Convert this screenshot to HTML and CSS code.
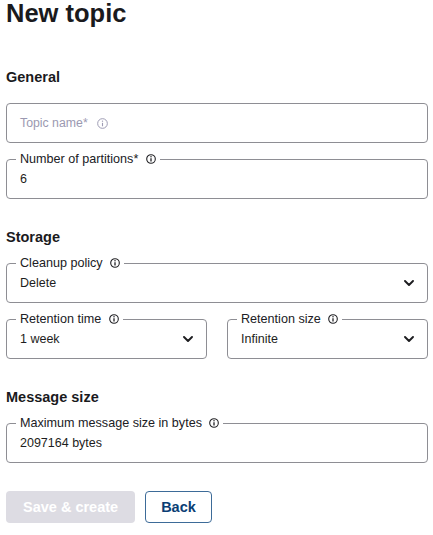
FILE: index.html
```html
<!DOCTYPE html>
<html lang="en">
<head>
<meta charset="utf-8">
<title>New topic</title>
<link rel="stylesheet" href="styles.css">
</head>
<body>
<main class="page">
  <h1 class="title">New topic</h1>

  <section class="section">
    <h2 class="section-title">General</h2>
    <div class="fields">
      <div class="input input--empty">
        <span class="placeholder">Topic name*</span>
        <svg class="info info--lg" viewBox="0 0 10 10" aria-hidden="true"><circle cx="5" cy="5" r="4.4" fill="none" stroke="currentColor" stroke-width="0.9"/><path d="M5 4.4v3.1" stroke="currentColor" stroke-width="1"/><circle cx="5" cy="2.9" r="0.6" fill="currentColor"/></svg>
      </div>
      <fieldset class="field">
        <legend class="field-label">Number of partitions* <svg class="info" viewBox="0 0 10 10" aria-hidden="true"><circle cx="5" cy="5" r="4.3" fill="none" stroke="currentColor" stroke-width="1.1"/><path d="M5 4.3v3.2" stroke="currentColor" stroke-width="1.3"/><circle cx="5" cy="2.7" r="0.75" fill="currentColor"/></svg></legend>
        <div class="field-value">6</div>
      </fieldset>
    </div>
  </section>

  <section class="section">
    <h2 class="section-title">Storage</h2>
    <div class="fields">
      <fieldset class="field">
        <legend class="field-label">Cleanup policy <svg class="info" viewBox="0 0 10 10" aria-hidden="true"><circle cx="5" cy="5" r="4.3" fill="none" stroke="currentColor" stroke-width="1.1"/><path d="M5 4.3v3.2" stroke="currentColor" stroke-width="1.3"/><circle cx="5" cy="2.7" r="0.75" fill="currentColor"/></svg></legend>
        <div class="field-value field-value--select"><span>Delete</span><svg class="chevron" viewBox="0 0 10 6" aria-hidden="true"><path d="M1 1l4 4 4-4" fill="none" stroke="currentColor" stroke-width="1.9" stroke-linecap="round" stroke-linejoin="round"/></svg></div>
      </fieldset>
      <div class="row">
        <fieldset class="field">
          <legend class="field-label">Retention time <svg class="info" viewBox="0 0 10 10" aria-hidden="true"><circle cx="5" cy="5" r="4.3" fill="none" stroke="currentColor" stroke-width="1.1"/><path d="M5 4.3v3.2" stroke="currentColor" stroke-width="1.3"/><circle cx="5" cy="2.7" r="0.75" fill="currentColor"/></svg></legend>
          <div class="field-value field-value--select"><span>1 week</span><svg class="chevron" viewBox="0 0 10 6" aria-hidden="true"><path d="M1 1l4 4 4-4" fill="none" stroke="currentColor" stroke-width="1.9" stroke-linecap="round" stroke-linejoin="round"/></svg></div>
        </fieldset>
        <fieldset class="field">
          <legend class="field-label">Retention size <svg class="info" viewBox="0 0 10 10" aria-hidden="true"><circle cx="5" cy="5" r="4.3" fill="none" stroke="currentColor" stroke-width="1.1"/><path d="M5 4.3v3.2" stroke="currentColor" stroke-width="1.3"/><circle cx="5" cy="2.7" r="0.75" fill="currentColor"/></svg></legend>
          <div class="field-value field-value--select"><span>Infinite</span><svg class="chevron" viewBox="0 0 10 6" aria-hidden="true"><path d="M1 1l4 4 4-4" fill="none" stroke="currentColor" stroke-width="1.9" stroke-linecap="round" stroke-linejoin="round"/></svg></div>
        </fieldset>
      </div>
    </div>
  </section>

  <section class="section">
    <h2 class="section-title">Message size</h2>
    <div class="fields">
      <fieldset class="field">
        <legend class="field-label">Maximum message size in bytes <svg class="info" viewBox="0 0 10 10" aria-hidden="true"><circle cx="5" cy="5" r="4.3" fill="none" stroke="currentColor" stroke-width="1.1"/><path d="M5 4.3v3.2" stroke="currentColor" stroke-width="1.3"/><circle cx="5" cy="2.7" r="0.75" fill="currentColor"/></svg></legend>
        <div class="field-value">2097164 bytes</div>
      </fieldset>
    </div>
  </section>

  <div class="actions">
    <button class="btn btn--disabled" type="button" disabled>Save &amp; create</button>
    <button class="btn btn--secondary" type="button">Back</button>
  </div>
</main>
</body>
</html>
```

FILE: styles.css
```css
* {
  box-sizing: border-box;
}

body {
  margin: 0;
  background: #ffffff;
  color: #1d1d20;
  font-family: "Liberation Sans", Arial, sans-serif;
}

.page {
  display: flex;
  flex-direction: column;
  gap: 28px;
  padding: 0 5px 0 6px;
}

.title {
  margin: 0 0 13px;
  font-size: 25.5px;
  line-height: 26px;
  font-weight: 700;
  color: #1a1a1d;
}

.section-title {
  margin: 0 0 9px;
  font-size: 14.5px;
  line-height: 20px;
  font-weight: 700;
  color: #1a1a1d;
}

.fields {
  display: flex;
  flex-direction: column;
  gap: 9px;
}

.input {
  margin-top: 7px;
  height: 40px;
  border: 1px solid #8e8e94;
  border-radius: 4px;
  display: flex;
  align-items: center;
  gap: 9px;
  padding: 0 13px;
}

.placeholder {
  font-size: 12.3px;
  color: #9b99b1;
}

.info {
  width: 10px;
  height: 10px;
  vertical-align: -1px;
  margin-left: 4px;
  color: #202024;
}

.info--lg {
  width: 11px;
  height: 11px;
  margin-left: 0;
  color: #9d9bb3;
}

.field {
  margin: 0;
  min-width: 0;
  border: 1px solid #8e8e94;
  border-radius: 4px;
  padding: 4px 13px 11px;
}

.field-label {
  margin-left: -4px;
  padding: 0 4px;
  font-size: 12.6px;
  line-height: 15px;
  color: #202024;
}

.field-value {
  font-size: 12.5px;
  line-height: 16px;
  color: #1d1d20;
}

.field-value--select {
  display: flex;
  align-items: center;
  justify-content: space-between;
}

.chevron {
  width: 10px;
  height: 6px;
  color: #1d1d20;
}

.row {
  display: grid;
  grid-template-columns: 1fr 1fr;
  gap: 20px;
}

.actions {
  display: flex;
  gap: 10px;
}

.btn {
  height: 32px;
  padding: 0 16px;
  border-radius: 4px;
  font-family: "Liberation Sans", Arial, sans-serif;
  font-size: 14.5px;
  font-weight: 700;
  border: 1px solid transparent;
}

.btn--disabled {
  background: #dddce3;
  color: #ffffff;
}

.btn--secondary {
  padding: 0 15px;
  background: #ffffff;
  border-color: #3d6b98;
  color: #0a3e74;
}
```
